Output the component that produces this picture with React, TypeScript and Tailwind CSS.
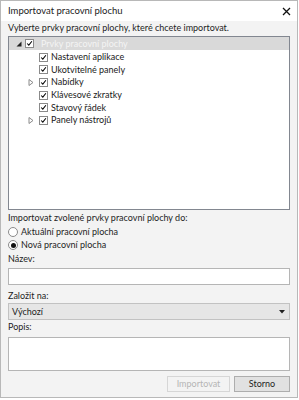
import React from "react";

const Check = () => (
  <span className="w-[9px] h-[9px] border border-[#8a8a8a] bg-white flex items-center justify-center shrink-0">
    <svg width="9" height="9" viewBox="0 0 9 9">
      <path d="M1.5 4.5 L3.6 6.6 L7.6 1.6" fill="none" stroke="#000" strokeWidth="1.3" />
    </svg>
  </span>
);

const ExpandArrow = () => (
  <svg width="6" height="7" viewBox="0 0 6 7" className="shrink-0">
    <path d="M1 0.5 L5 3.5 L1 6.5 Z" fill="#fff" stroke="#8a8a8a" strokeWidth="1" />
  </svg>
);

const Item = ({ label, expandable }: { label: string; expandable?: boolean }) => (
  <div className="flex items-center h-[12.6px] pl-[19px]">
    <span className="w-[11px] flex items-center">{expandable ? <ExpandArrow /> : null}</span>
    <Check />
    <span className="ml-[3px] text-[#1a1a1a]">{label}</span>
  </div>
);

export default function App() {
  return (
    <div
      className="w-[299px] h-[400px] bg-white text-[9px] leading-[12px] text-[#1e1e1e] overflow-hidden"
      style={{ fontFamily: 'Lato, "Noto Sans", sans-serif' }}
    >
      <div className="w-[298px] h-[398px] border border-[#b8b8b8] flex flex-col">
        <div className="h-[20px] bg-white flex items-center justify-between pl-[7px] pr-[6px] shrink-0">
          <span className="text-[9.5px] text-[#222]">Importovat pracovní plochu</span>
          <svg width="9" height="9" viewBox="0 0 9 9">
            <path d="M1 1 L8 8 M8 1 L1 8" stroke="#111" strokeWidth="1.3" />
          </svg>
        </div>
        <div className="flex-1 bg-[#f3f3f3] px-[7px] pt-[1px] flex flex-col">
          <div className="h-[12px]">Vyberte prvky pracovní plochy, které chcete importovat.</div>
          <div className="mt-[2px] h-[174px] bg-white border border-[#828790] flex flex-col pt-[0px]">
            <div className="h-[13px] bg-[#d9d9d9] flex items-center pl-[7px]">
              <svg width="6" height="6" viewBox="0 0 6 6" className="mr-[3px]">
                <path d="M5.5 0.5 L5.5 5.5 L0.5 5.5 Z" fill="#222" />
              </svg>
              <Check />
              <span className="ml-[7px] text-[#f4f4f4]">Prvky pracovní plochy</span>
            </div>
            <div className="pt-[1px]">
              <Item label="Nastavení aplikace" />
              <Item label="Ukotvitelné panely" />
              <Item label="Nabídky" expandable />
              <Item label="Klávesové zkratky" />
              <Item label="Stavový řádek" />
              <Item label="Panely nástrojů" expandable />
            </div>
          </div>
          <div className="mt-[2px] h-[12px]">Importovat zvolené prvky pracovní plochy do:</div>
          <div className="mt-[2px] h-[12px] flex items-center">
            <span className="w-[10px] h-[10px] rounded-full border border-[#8a8a8a] bg-white mr-[3px]" />
            <span>Aktuální pracovní plocha</span>
          </div>
          <div className="mt-[1px] h-[12px] flex items-center">
            <span className="w-[10px] h-[10px] rounded-full border border-[#8a8a8a] bg-white mr-[3px] flex items-center justify-center">
              <span className="w-[5px] h-[5px] rounded-full bg-[#111]" />
            </span>
            <span>Nová pracovní plocha</span>
          </div>
          <div className="mt-[2px] h-[12px]">Název:</div>
          <div className="mt-[3px] h-[17px] bg-white border border-[#b5b5b5]" />
          <div className="mt-[5px] h-[12px]">Založit na:</div>
          <div className="mt-[1px] h-[17px] bg-[#e6e6e6] border border-[#c2c2c2] flex items-center justify-between pl-[3px] pr-[4px]">
            <span>Výchozí</span>
            <svg width="6" height="4" viewBox="0 0 6 4">
              <path d="M0 0 L6 0 L3 3.5 Z" fill="#222" />
            </svg>
          </div>
          <div className="mt-[1px] h-[12px]">Popis:</div>
          <div className="mt-[4px] h-[34px] bg-white border border-[#b5b5b5]" />
          <div className="mt-[5px] flex justify-end gap-[4px]">
            <div className="w-[63px] h-[16px] border border-[#d6d6d6] bg-[#f3f3f3] flex items-center justify-center text-[#b5b5b5]">
              Importovat
            </div>
            <div className="w-[56px] h-[16px] border border-[#adadad] bg-[#e1e1e1] flex items-center justify-center">
              Storno
            </div>
          </div>
        </div>
      </div>
    </div>
  );
}
